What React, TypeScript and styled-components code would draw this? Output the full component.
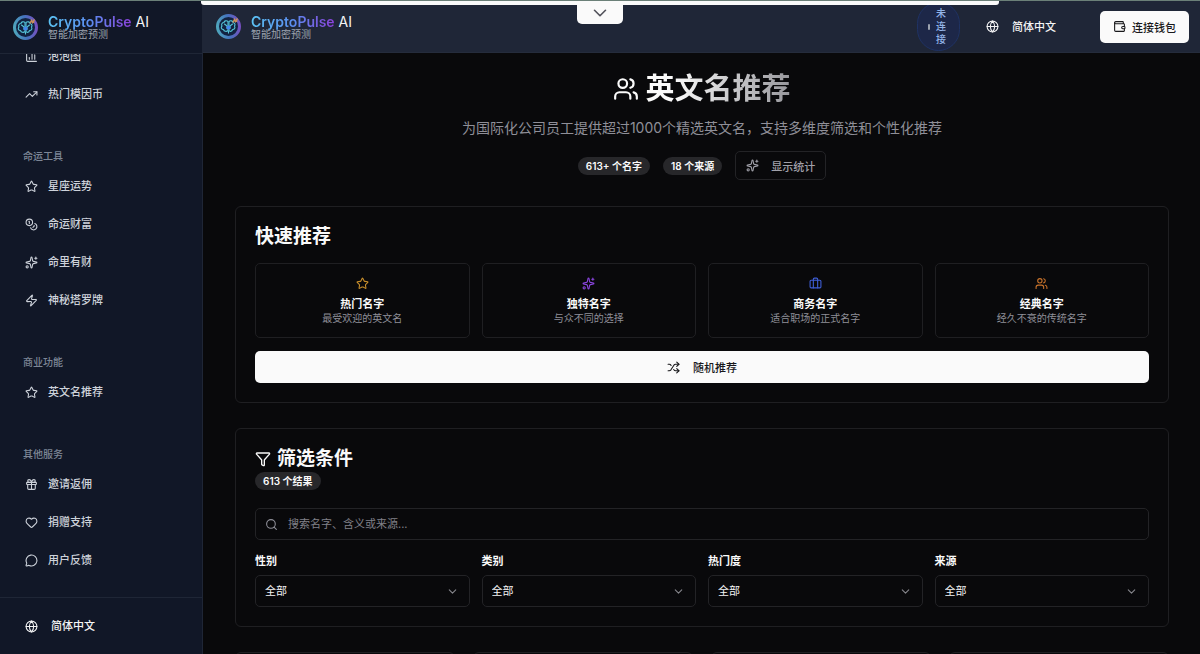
import React from "react";
import styled, { createGlobalStyle } from "styled-components";
import {
  Star, Coins, Sparkles, Zap, Gift, Heart, MessageCircle, Globe, TrendingUp,
  ChartColumn, Wallet, Users, Briefcase, Shuffle, Funnel, Search, ChevronDown,
} from "lucide-react";

const Global = createGlobalStyle`
  * { box-sizing: border-box; }
  html, body { margin: 0; background: #09090b; }
  body, button, input, select {
    font-family: Inter, "Noto Sans CJK SC", sans-serif;
  }
  button, a { cursor: pointer; }
`;

const Shell = styled.div`
  display: flex;
  height: 100vh;
  overflow: hidden;
  color: #fafafa;
  font-size: 11px;
  line-height: 16px;
  position: relative;
`;

const TopLine = styled.div`
  position: absolute;
  inset: 0 0 auto 0;
  height: 1px;
  background: #6b8078;
`;

const Banner = styled.div`
  position: absolute;
  top: 1px;
  left: 201px;
  right: 201px;
  height: 4px;
  background: #fafafa;
  border-radius: 0 0 3px 3px;
`;

const BannerTab = styled.button`
  position: absolute;
  top: 1px;
  left: 50%;
  transform: translateX(-50%);
  width: 46px;
  height: 23px;
  border: 0;
  padding: 0;
  display: grid;
  place-items: center;
  background: #fafafa;
  color: #52525b;
  border-radius: 0 0 5px 5px;
`;

const Sidebar = styled.aside`
  flex: 0 0 203px;
  display: flex;
  flex-direction: column;
  background: #111727;
  border-right: 1px solid #1f2636;
`;

const SideHead = styled.div`
  flex: none;
  height: 54px;
  padding: 1px 12px 0;
  display: flex;
  align-items: center;
  border-bottom: 1px solid #1f2636;
`;

const BrandLink = styled.a`
  display: flex;
  align-items: center;
  gap: 9px;
  color: #f4f4f5;
  text-decoration: none;
`;

const BrandText = styled.span`
  display: flex;
  flex-direction: column;
`;

const BrandName = styled.span`
  font-size: 14px;
  line-height: 14px;
  white-space: nowrap;
`;

const Pulse = styled.span`
  font-weight: 600;
  background: linear-gradient(90deg, #5cc4f5, #5b8df0 50%, #8b3fd9);
  background-clip: text;
  -webkit-background-clip: text;
  color: transparent;
`;

const Tagline = styled.span`
  font-size: 10px;
  line-height: 10px;
  color: #9ca3af;
`;

const Nav = styled.nav`
  flex: 1;
  min-height: 0;
  overflow: hidden;
  display: flex;
  flex-direction: column;
  justify-content: flex-end;
  gap: 33px;
  padding: 0 16px 18px;
`;

const Group = styled.section`
  flex: none;
`;

const GroupTitle = styled.h2`
  margin: 0;
  padding: 0 7px 1px;
  font-size: 10px;
  line-height: 20px;
  font-weight: 500;
  color: #7d8696;
`;

const NavLink = styled.a`
  display: flex;
  align-items: center;
  gap: 10px;
  height: 38px;
  padding: 0 9px;
  font-weight: 500;
  color: #cdd2da;
  text-decoration: none;
`;

const SideFoot = styled.div`
  flex: none;
  height: 57px;
  padding: 0 25px;
  display: flex;
  align-items: center;
  border-top: 1px solid #1f2636;
`;

const LangButton = styled.button`
  display: flex;
  align-items: center;
  gap: 13px;
  padding: 0;
  border: 0;
  background: none;
  color: #f4f4f5;
  font-size: 11px;
  line-height: 16px;
  font-weight: 500;
  white-space: nowrap;
`;

const Page = styled.div`
  flex: 1;
  min-width: 0;
  display: flex;
  flex-direction: column;
`;

const Header = styled.header`
  flex: none;
  height: 53px;
  padding: 1px 11px 0 12px;
  display: flex;
  align-items: center;
  justify-content: space-between;
  background: #1f2637;
  border-bottom: 1px solid #252c3c;
`;

const HeaderActions = styled.div`
  display: flex;
  align-items: center;
`;

const Status = styled.span`
  display: flex;
  align-items: center;
  gap: 6px;
  width: 43px;
  padding: 4px 13px 4px 10px;
  border: 1px solid #1f3263;
  border-radius: 22px;
  background: #1d2748;
  color: #93b4e8;
  font-size: 10px;
  line-height: 13px;
  font-weight: 500;
  margin-right: 26px;
`;

const StatusDot = styled.i`
  flex: none;
  width: 2px;
  height: 6px;
  border-radius: 1px;
  background: #9ca3af;
`;

const WalletButton = styled.button`
  display: flex;
  align-items: center;
  gap: 6px;
  height: 32px;
  padding: 0 13px;
  margin-left: 44px;
  border: 0;
  border-radius: 5px;
  background: #fafafa;
  color: #18181b;
  font-size: 11px;
  font-weight: 500;
  white-space: nowrap;
`;

const Main = styled.main`
  flex: 1;
  min-height: 0;
  overflow: hidden;
  padding: 17px 31px 0 32px;
`;

const Hero = styled.div`
  display: flex;
  flex-direction: column;
  align-items: center;
  margin-bottom: 26px;
`;

const Title = styled.h1`
  margin: 0;
  display: flex;
  align-items: center;
  gap: 6px;
  font-size: 29px;
  line-height: 38px;
  font-weight: 700;
`;

const TitleText = styled.span`
  background: linear-gradient(90deg, #fafafa 20%, #97979c);
  background-clip: text;
  -webkit-background-clip: text;
  color: transparent;
`;

const Lead = styled.p`
  margin: 8px 0 11px;
  font-size: 14px;
  line-height: 24px;
  color: #8f8f98;
`;

const Stats = styled.div`
  display: flex;
  align-items: center;
  gap: 13px;
`;

const Badge = styled.span`
  display: inline-block;
  padding: 0 8px;
  border-radius: 9px;
  background: #27272a;
  color: #fafafa;
  font-size: 10px;
  line-height: 18px;
  font-weight: 600;
`;

const StatsButton = styled.button`
  display: flex;
  align-items: center;
  gap: 12px;
  height: 29px;
  padding: 0 10px;
  border: 1px solid #232326;
  border-radius: 5px;
  background: none;
  color: #a1a1aa;
  font-size: 11px;
  font-weight: 500;
`;

const Card = styled.section`
  padding: 17px 19px 19px;
  margin-bottom: 25px;
  border: 1px solid #1f1f22;
  border-radius: 6px;
`;

const CardTitle = styled.h2`
  margin: 0;
  display: flex;
  align-items: center;
  gap: 6px;
  font-size: 19px;
  line-height: 26px;
  font-weight: 600;
`;

const Columns = styled.div`
  display: grid;
  grid-template-columns: repeat(4, 1fr);
  gap: 12px;
`;

const PickButton = styled.button`
  display: flex;
  flex-direction: column;
  align-items: center;
  height: 75px;
  padding: 13px 12px 0;
  border: 1px solid #1f1f22;
  border-radius: 5px;
  background: none;
  color: #fafafa;
`;

const PickName = styled.span`
  margin-top: 6px;
  font-size: 11px;
  line-height: 16px;
  font-weight: 600;
`;

const PickNote = styled.span`
  font-size: 10px;
  line-height: 13px;
  color: #8f8f98;
`;

const Picks = styled(Columns)`
  margin: 13px 0;
`;

const RandomButton = styled.button`
  display: flex;
  width: 100%;
  height: 32px;
  align-items: center;
  justify-content: center;
  gap: 13px;
  border: 0;
  border-radius: 5px;
  background: #fafafa;
  color: #18181b;
  font-size: 11px;
  font-weight: 500;
`;

const SearchBox = styled.label`
  display: flex;
  align-items: center;
  gap: 10px;
  height: 32px;
  margin: 18px 0 13px;
  padding: 0 9px;
  border: 1px solid #232326;
  border-radius: 5px;
  color: #8f8f98;
`;

const SearchInput = styled.input`
  flex: 1;
  min-width: 0;
  padding: 0;
  border: 0;
  outline: 0;
  background: none;
  color: #fafafa;
  font-size: 11px;
  &::placeholder { color: #808088; opacity: 1; }
`;

const Field = styled.div`
  display: flex;
  flex-direction: column;
  gap: 6px;
`;

const FieldLabel = styled.label`
  font-size: 11px;
  line-height: 16px;
  font-weight: 600;
`;

const SelectWrap = styled.div`
  display: grid;
  align-items: center;
  & > * { grid-area: 1 / 1; }
  & > svg { justify-self: end; margin-right: 11px; color: #86868c; pointer-events: none; }
`;

const Select = styled.select`
  appearance: none;
  height: 32px;
  width: 100%;
  padding: 0 9px;
  border: 1px solid #232326;
  border-radius: 5px;
  background: #09090b;
  color: #f4f4f5;
  font-size: 11px;
`;

const Results = styled.div`
  display: grid;
  grid-template-columns: repeat(4, 1fr);
  gap: 18px;
`;

const ResultCard = styled.article`
  height: 160px;
  border: 1px solid #1f1f22;
  border-radius: 6px;
`;

function Logo({ id }: { id: string }) {
  return (
    <svg width="27" height="27" viewBox="0 0 54 54" fill="none" aria-hidden="true">
      <defs>
        <linearGradient id={id} x1="4" y1="30" x2="50" y2="24" gradientUnits="userSpaceOnUse">
          <stop offset="0" stopColor="#4fa6bd" />
          <stop offset="0.5" stopColor="#4473bd" />
          <stop offset="1" stopColor="#7650c0" />
        </linearGradient>
      </defs>
      <circle cx="27" cy="27" r="22" fill="#122341" stroke={`url(#${id})`} strokeWidth="6" />
      <g stroke="#55c4d8" strokeWidth="2.2" strokeLinecap="round" strokeLinejoin="round">
        <path d="M26 17c-3-3-8-1-8 2-4 0-6 4-4 7-3 3-1 7 3 7 1 4 6 5 9 2z" />
        <path d="M28 17c3-3 8-1 8 2 4 1 5 5 3 7 2 4 0 7-4 7-1 4-5 5-7 2z" />
        <path d="M19 22l5 4v5M35 22l-5 4v5M27 36v4" />
      </g>
      <circle cx="27" cy="29" r="4" fill="#4487ef" />
      <path d="M36 19l3-6 2 4 4-6" stroke="#c98f5c" strokeWidth="3" />
      <circle cx="43" cy="16" r="2" fill="#c98f5c" />
    </svg>
  );
}

function Brand({ id }: { id: string }) {
  return (
    <BrandLink href="#home">
      <Logo id={id} />
      <BrandText>
        <BrandName><Pulse>CryptoPulse</Pulse> AI</BrandName>
        <Tagline>智能加密预测</Tagline>
      </BrandText>
    </BrandLink>
  );
}

const groups = [
  { title: "", items: [{ icon: ChartColumn, text: "泡泡图" }, { icon: TrendingUp, text: "热门模因币" }] },
  {
    title: "命运工具",
    items: [
      { icon: Star, text: "星座运势" },
      { icon: Coins, text: "命运财富" },
      { icon: Sparkles, text: "命里有财" },
      { icon: Zap, text: "神秘塔罗牌" },
    ],
  },
  { title: "商业功能", items: [{ icon: Star, text: "英文名推荐" }] },
  {
    title: "其他服务",
    items: [
      { icon: Gift, text: "邀请返佣" },
      { icon: Heart, text: "捐赠支持" },
      { icon: MessageCircle, text: "用户反馈" },
    ],
  },
];

const picks = [
  { icon: Star, color: "#c98f2b", name: "热门名字", note: "最受欢迎的英文名" },
  { icon: Sparkles, color: "#8b45e0", name: "独特名字", note: "与众不同的选择" },
  { icon: Briefcase, color: "#3f5fd8", name: "商务名字", note: "适合职场的正式名字" },
  { icon: Users, color: "#c9732b", name: "经典名字", note: "经久不衰的传统名字" },
];

const filters = [
  { id: "gender", label: "性别" },
  { id: "category", label: "类别" },
  { id: "popularity", label: "热门度" },
  { id: "origin", label: "来源" },
];

export default function App() {
  return (
    <>
      <Global />
      <Shell>
        <Sidebar>
          <SideHead><Brand id="ring-side" /></SideHead>
          <Nav>
            {groups.map((g, i) => (
              <Group key={i}>
                {g.title && <GroupTitle>{g.title}</GroupTitle>}
                {g.items.map(({ icon: Icon, text }) => (
                  <NavLink key={text} href="#nav"><Icon size={13} />{text}</NavLink>
                ))}
              </Group>
            ))}
          </Nav>
          <SideFoot>
            <LangButton><Globe size={13} />简体中文</LangButton>
          </SideFoot>
        </Sidebar>
        <Page>
          <Header>
            <Brand id="ring-head" />
            <HeaderActions>
              <Status><StatusDot />未连接</Status>
              <LangButton><Globe size={13} />简体中文</LangButton>
              <WalletButton><Wallet size={13} />连接钱包</WalletButton>
            </HeaderActions>
          </Header>
          <Main>
            <Hero>
              <Title><Users size={26} /><TitleText>英文名推荐</TitleText></Title>
              <Lead>为国际化公司员工提供超过1000个精选英文名，支持多维度筛选和个性化推荐</Lead>
              <Stats>
                <Badge>613+ 个名字</Badge>
                <Badge>18 个来源</Badge>
                <StatsButton><Sparkles size={13} />显示统计</StatsButton>
              </Stats>
            </Hero>
            <Card>
              <CardTitle>快速推荐</CardTitle>
              <Picks>
                {picks.map(({ icon: Icon, color, name, note }) => (
                  <PickButton key={name}>
                    <Icon size={13} color={color} />
                    <PickName>{name}</PickName>
                    <PickNote>{note}</PickNote>
                  </PickButton>
                ))}
              </Picks>
              <RandomButton><Shuffle size={13} />随机推荐</RandomButton>
            </Card>
            <Card>
              <CardTitle><Funnel size={16} />筛选条件</CardTitle>
              <Badge>613 个结果</Badge>
              <SearchBox>
                <Search size={13} />
                <SearchInput type="text" aria-label="搜索" placeholder="搜索名字、含义或来源..." />
              </SearchBox>
              <Columns>
                {filters.map(({ id, label }) => (
                  <Field key={id}>
                    <FieldLabel htmlFor={id}>{label}</FieldLabel>
                    <SelectWrap>
                      <Select id={id}><option>全部</option></Select>
                      <ChevronDown size={13} />
                    </SelectWrap>
                  </Field>
                ))}
              </Columns>
            </Card>
            <Results>
              <ResultCard /><ResultCard /><ResultCard /><ResultCard />
            </Results>
          </Main>
        </Page>
        <TopLine />
        <Banner />
        <BannerTab aria-label="展开"><ChevronDown size={22} strokeWidth={1.75} /></BannerTab>
      </Shell>
    </>
  );
}
